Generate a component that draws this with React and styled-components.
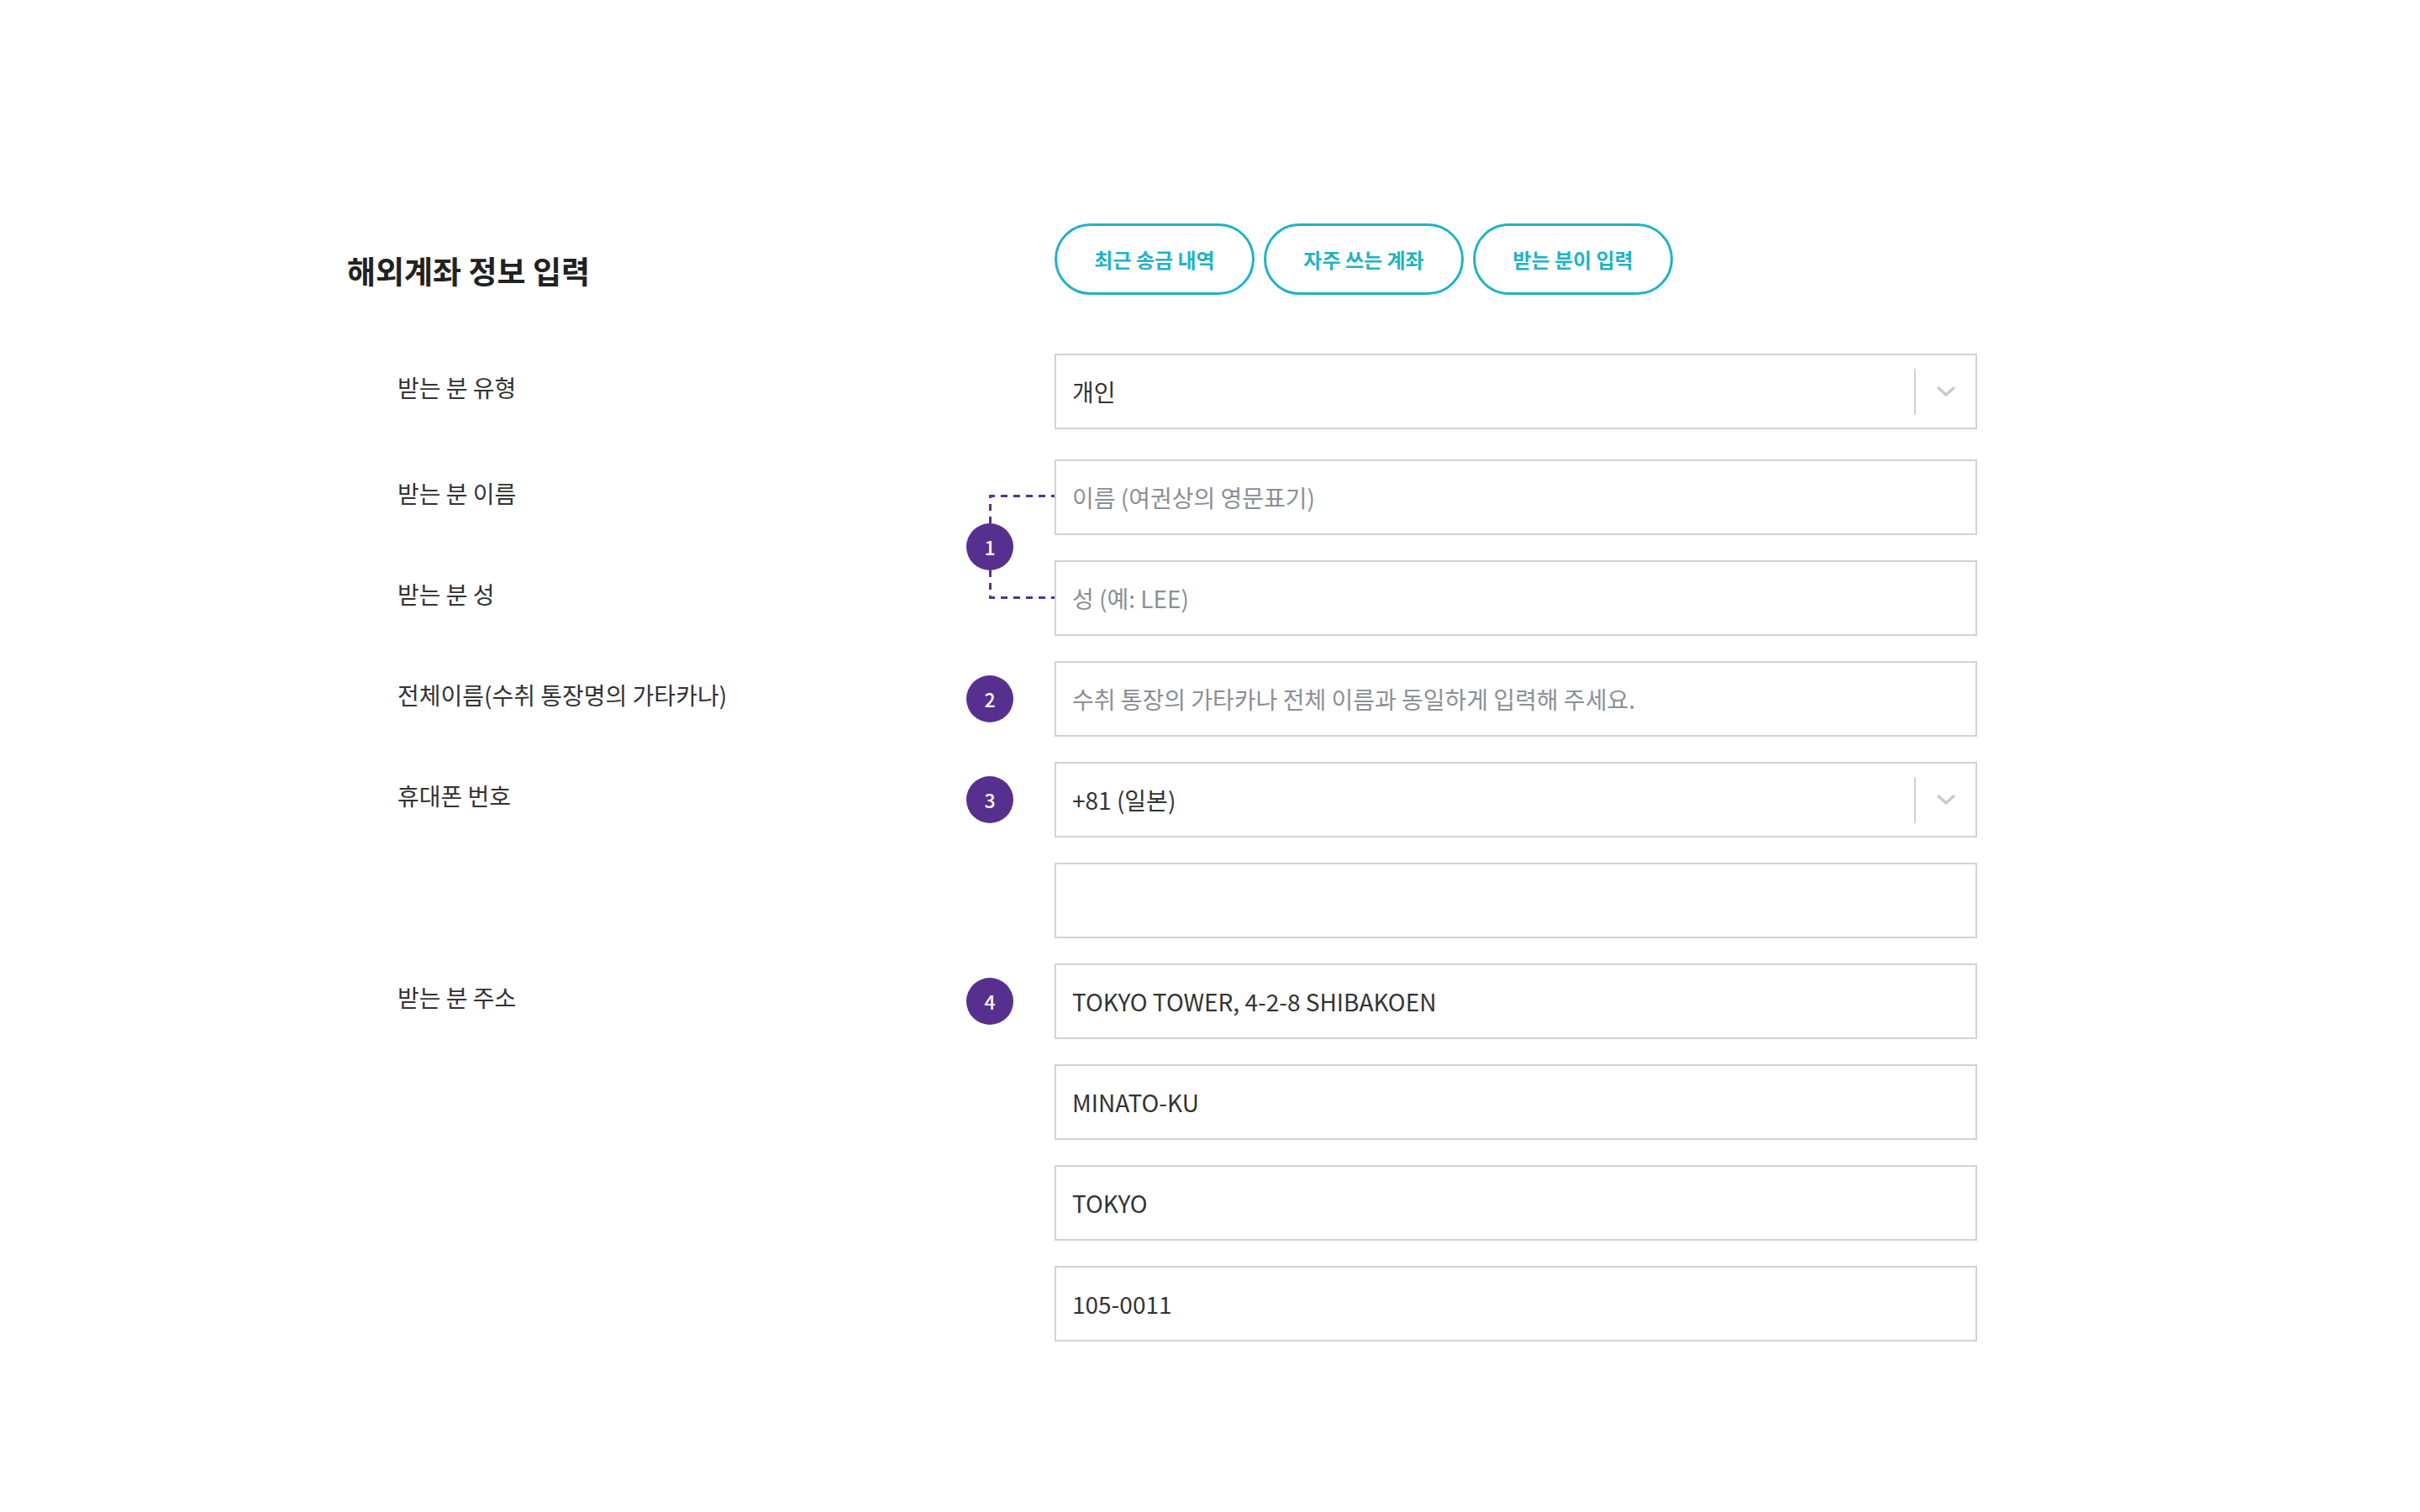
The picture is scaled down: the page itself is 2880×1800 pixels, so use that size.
import React from 'react';
import styled, { createGlobalStyle } from 'styled-components';

const GlobalStyle = createGlobalStyle`
  html, body {
    margin: 0;
    padding: 0;
    background: #fff;
  }
  body {
    font-family: "Noto Sans CJK KR", "Noto Sans", sans-serif;
    color: #333;
  }
  * { box-sizing: border-box; }
`;

const PURPLE = '#57308f';
const TEAL = '#1fb3c3';
const LINE = '#cfd2d6';

const Page = styled.div`
  padding: 266px 0 200px 413px;
`;

const Header = styled.div`
  display: grid;
  grid-template-columns: 842px 1098px;
  align-items: end;
  margin-bottom: 70px;
`;

const Title = styled.h2`
  margin: 0 0 2px;
  font-size: 37px;
  font-weight: 700;
  color: #222;
  line-height: 1.4;
`;

const ButtonGroup = styled.div`
  display: flex;
  gap: 11px;
`;

const PillButton = styled.button`
  width: 238px;
  height: 85px;
  border: 3px solid ${TEAL};
  border-radius: 43px;
  background: #fff;
  color: ${TEAL};
  font-family: inherit;
  font-size: 24px;
  font-weight: 700;
  cursor: pointer;
`;

const Form = styled.div`
  display: flex;
  flex-direction: column;
  gap: 30px;
`;

const Row = styled.div`
  display: grid;
  grid-template-columns: 737px 105px 1098px;
  margin-bottom: ${p => p.$extra || 0}px;
`;

const LabelCol = styled.div`
  display: flex;
  flex-direction: column;
  gap: 30px;
  padding-left: 60px;
`;

const Label = styled.div`
  height: 90px;
  line-height: 80px;
  font-size: 28px;
  color: #333;
  white-space: nowrap;
`;

const BadgeCol = styled.div`
  display: flex;
  flex-direction: column;
`;

const BadgeSlot = styled.div`
  height: 90px;
  display: flex;
  align-items: center;
`;

const Badge = styled.div`
  width: 56px;
  height: 56px;
  border-radius: 50%;
  background: ${PURPLE};
  color: #fff;
  font-size: 23px;
  font-weight: 500;
  display: flex;
  align-items: center;
  justify-content: center;
  flex-shrink: 0;
`;

const Bracket = styled.div`
  display: flex;
  flex-direction: column;
  padding-top: 42px;
`;

const BracketLine = styled.svg`
  display: block;
  width: 78px;
  height: 34px;
  margin-left: 27px;
`;

const FieldCol = styled.div`
  display: flex;
  flex-direction: column;
  gap: 30px;
`;

const Field = styled.div`
  height: 90px;
  border: 2px solid ${LINE};
  background: #fff;
  display: flex;
  align-items: center;
  padding: 0 0 0 19px;
  font-size: 28px;
  color: ${p => (p.$placeholder ? '#8b8f96' : '#333')};
  white-space: nowrap;
`;

const FieldText = styled.span`
  flex: 1;
`;

const SelectArrow = styled.div`
  width: 73px;
  height: 55px;
  border-left: 2px solid #d2d2d2;
  display: flex;
  align-items: center;
  justify-content: center;
`;

const Chevron = () => (
  <svg width="24" height="14" viewBox="0 0 24 14">
    <polyline points="2,2 12,11 22,2" fill="none" stroke="#cacaca" strokeWidth="3.5" />
  </svg>
);

function Select({ value }) {
  return (
    <Field>
      <FieldText>{value}</FieldText>
      <SelectArrow>
        <Chevron />
      </SelectArrow>
    </Field>
  );
}

function NameBracket() {
  return (
    <Bracket>
      <BracketLine viewBox="0 0 78 34">
        <path d="M1.5 34 V1.5 H78" fill="none" stroke={PURPLE} strokeWidth="3" strokeDasharray="8 7" />
      </BracketLine>
      <Badge>1</Badge>
      <BracketLine viewBox="0 0 78 34">
        <path d="M1.5 0 V32.5 H78" fill="none" stroke={PURPLE} strokeWidth="3" strokeDasharray="8 7" />
      </BracketLine>
    </Bracket>
  );
}

export default function App() {
  return (
    <Page>
      <GlobalStyle />
      <Header>
        <Title>해외계좌 정보 입력</Title>
        <ButtonGroup>
          <PillButton>최근 송금 내역</PillButton>
          <PillButton>자주 쓰는 계좌</PillButton>
          <PillButton>받는 분이 입력</PillButton>
        </ButtonGroup>
      </Header>

      <Form>
        <Row $extra={6}>
          <LabelCol><Label>받는 분 유형</Label></LabelCol>
          <BadgeCol />
          <FieldCol><Select value="개인" /></FieldCol>
        </Row>

        <Row>
          <LabelCol>
            <Label>받는 분 이름</Label>
            <Label>받는 분 성</Label>
          </LabelCol>
          <BadgeCol><NameBracket /></BadgeCol>
          <FieldCol>
            <Field $placeholder>이름 (여권상의 영문표기)</Field>
            <Field $placeholder>성 (예: LEE)</Field>
          </FieldCol>
        </Row>

        <Row>
          <LabelCol><Label>전체이름(수취 통장명의 가타카나)</Label></LabelCol>
          <BadgeCol><BadgeSlot><Badge>2</Badge></BadgeSlot></BadgeCol>
          <FieldCol>
            <Field $placeholder>수취 통장의 가타카나 전체 이름과 동일하게 입력해 주세요.</Field>
          </FieldCol>
        </Row>

        <Row>
          <LabelCol><Label>휴대폰 번호</Label></LabelCol>
          <BadgeCol><BadgeSlot><Badge>3</Badge></BadgeSlot></BadgeCol>
          <FieldCol>
            <Select value="+81 (일본)" />
            <Field />
          </FieldCol>
        </Row>

        <Row>
          <LabelCol><Label>받는 분 주소</Label></LabelCol>
          <BadgeCol><BadgeSlot><Badge>4</Badge></BadgeSlot></BadgeCol>
          <FieldCol>
            <Field>TOKYO TOWER, 4-2-8 SHIBAKOEN</Field>
            <Field>MINATO-KU</Field>
            <Field>TOKYO</Field>
            <Field>105-0011</Field>
          </FieldCol>
        </Row>
      </Form>
    </Page>
  );
}
